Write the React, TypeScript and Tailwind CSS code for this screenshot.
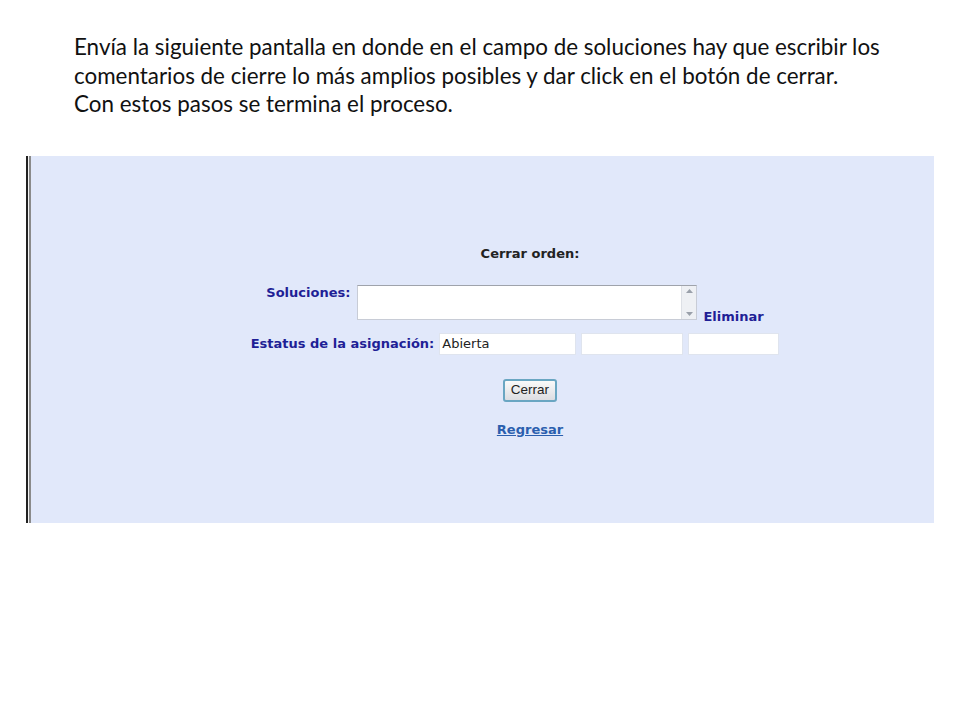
import React from 'react';

export default function App() {
    return (
        <div className="w-[960px] h-[720px] bg-white relative overflow-hidden">
            {/* instructions */}
            <div className="pl-[74px] pt-[33px] text-[22.4px] leading-[28.5px] text-[#111] font-['Lato',sans-serif]">
                <p>Envía la siguiente pantalla en donde en el campo de soluciones hay que escribir los</p>
                <p>comentarios de cierre lo más amplios posibles y dar click en el botón de cerrar.</p>
                <p>Con estos pasos se termina el proceso.</p>
            </div>

            {/* screenshot panel */}
            <div className="ml-[26px] mt-[37px] w-[908px] h-[367px] flex">
                <div className="w-[2px] bg-[#222]" />
                <div className="w-[1px] bg-[#f4f4f4]" />
                <div className="w-[2px] bg-[#8a8a8a]" />
                <div className="flex-1 bg-[#e1e8fa] flex flex-col items-center font-['DejaVu_Sans',Verdana,sans-serif] text-[13px] leading-[16px]">
                    <div className="pl-[95px] mt-[90px] font-bold text-[#222]">Cerrar orden:</div>

                    {/* soluciones */}
                    <div className="pl-[65px] mt-[23px] flex items-start">
                        <span className="font-bold text-[#1f1f96] mr-[7px]">Soluciones:</span>
                        <div className="w-[340px] h-[35px] bg-white border border-[#c8ccd6] border-t-[#9fa3ab] flex">
                            <div className="flex-1" />
                            <div className="w-[15px] bg-[#eef0f4] border-l border-[#dde0e6] flex flex-col justify-between items-center py-[3px]">
                                <svg width="7" height="4" viewBox="0 0 7 4"><path d="M0 4 L3.5 0 L7 4 Z" fill="#9aa0aa" /></svg>
                                <svg width="7" height="4" viewBox="0 0 7 4"><path d="M0 0 L3.5 4 L7 0 Z" fill="#9aa0aa" /></svg>
                            </div>
                        </div>
                        <span className="font-bold text-[#1f1f96] self-end mb-[-5px] ml-[6px]">Eliminar</span>
                    </div>

                    {/* estatus */}
                    <div className="pl-[65px] mt-[13px] flex items-center">
                        <span className="font-bold text-[#1f1f96] mr-[5px]">Estatus de la asignación:</span>
                        <div className="w-[137px] h-[22px] bg-white border border-[#dfe4ee] flex items-center px-[2px] text-[13px] text-[#222] font-['DejaVu_Sans',Tahoma,sans-serif]">Abierta</div>
                        <div className="w-[102px] h-[22px] bg-white border border-[#dfe4ee] ml-[5px]" />
                        <div className="w-[91px] h-[22px] bg-white border border-[#dfe4ee] ml-[5px]" />
                    </div>

                    {/* button */}
                    <div className="pl-[95px] mt-[24px]">
                        <button className="w-[54px] h-[23px] rounded-[3px] border-2 border-[#6aa6c2] bg-gradient-to-b from-[#fafafa] to-[#dcdde2] text-[13.5px] text-[#222] font-['Liberation_Sans',Arial,sans-serif] leading-none">Cerrar</button>
                    </div>

                    <div className="pl-[95px] mt-[20px]">
                        <a className="font-bold underline text-[#2b5fae] text-[13px]">Regresar</a>
                    </div>
                </div>
            </div>
        </div>
    );
}
